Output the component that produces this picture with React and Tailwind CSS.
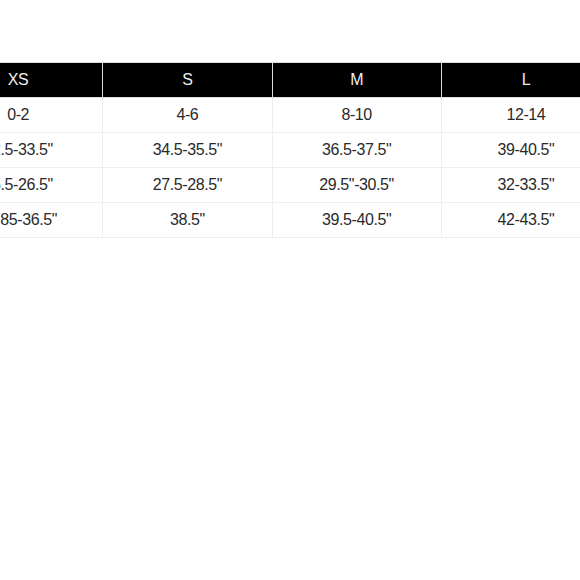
import React from 'react';

const sizes = ['XS', 'S', 'M', 'L'];
const rows = [
  ['0-2', '4-6', '8-10', '12-14'],
  ['32.5-33.5"', '34.5-35.5"', '36.5-37.5"', '39-40.5"'],
  ['25.5-26.5"', '27.5-28.5"', '29.5"-30.5"', '32-33.5"'],
  ['34.85-36.5"', '38.5"', '39.5-40.5"', '42-43.5"'],
];

const App = () => {
  return (
    <div className="w-[580px] h-[580px] overflow-hidden bg-white pt-[62px]" style={{ fontFamily: '"Liberation Sans", Arial, sans-serif' }}>
      <table className="ml-[-67px] border-collapse table-fixed w-[678px] text-[16px] tracking-[-0.4px] text-[#2a2a2a]">
        <thead>
          <tr>
            {sizes.map(s => (
              <th key={s} className="w-[169px] h-[35px] bg-black text-[#eee] font-normal border border-[#ddd] text-center">{s}</th>
            ))}
          </tr>
        </thead>
        <tbody>
          {rows.map((r, i) => (
            <tr key={i}>
              {r.map((c, j) => (
                <td key={j} className="h-[35px] border border-[#eee] text-center">{c}</td>
              ))}
            </tr>
          ))}
        </tbody>
      </table>
    </div>
  );
};

export default App;
